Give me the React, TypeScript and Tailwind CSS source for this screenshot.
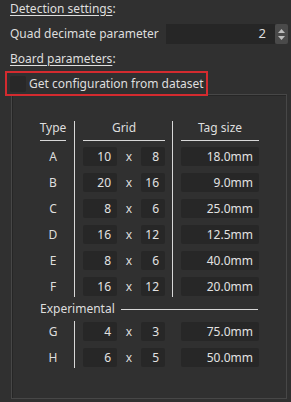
import React from "react";

const font = { fontFamily: '"Noto Sans", "Open Sans", sans-serif' };

type Row = { type: string; w: string; h: string; size: string };

const mainRows: Row[] = [
  { type: "A", w: "10", h: "8", size: "18.0mm" },
  { type: "B", w: "20", h: "16", size: "9.0mm" },
  { type: "C", w: "8", h: "6", size: "25.0mm" },
  { type: "D", w: "16", h: "12", size: "12.5mm" },
  { type: "E", w: "8", h: "6", size: "40.0mm" },
  { type: "F", w: "16", h: "12", size: "20.0mm" },
];

const expRows: Row[] = [
  { type: "G", w: "4", h: "3", size: "75.0mm" },
  { type: "H", w: "6", h: "5", size: "50.0mm" },
];

function Field({ value, width }: { value: string; width: string }) {
  return (
    <div className={`${width} h-[19px] bg-[#272727] rounded-[2px] flex items-center justify-end pr-[6px] text-[#e2e2e2]`}>
      {value}
    </div>
  );
}

function GridCell({ row }: { row: Row }) {
  return (
    <div className="flex items-center h-[19px]">
      <Field value={row.w} width="w-[34px]" />
      <span className="w-[24px] text-center">x</span>
      <Field value={row.h} width="w-[24px]" />
    </div>
  );
}

function Header({ label, width }: { label: string; width: string }) {
  return (
    <div className={`${width} h-[20px] border-b border-[#d8d8d8] flex items-start justify-center leading-[14px]`}>
      {label}
    </div>
  );
}

export default function App() {
  return (
    <div className="w-[291px] h-[402px] bg-[#303030] text-[#dedede] text-[12px] overflow-hidden relative" style={font}>
      <div className="pl-[10px] pt-[1px] h-[16px] leading-[16px]">
        <span className="underline underline-offset-2">Detection settings</span>:
      </div>

      <div className="flex items-center mt-[8px] h-[20px]">
        <div className="pl-[10px] w-[166px]">Quad decimate parameter</div>
        <div className="w-[109px] h-[20px] bg-[#262626] flex items-center justify-end pr-[9px] text-[13px]">2</div>
        <div className="w-[13px] h-[20px] bg-[#4a4a4a] rounded-[2px] flex flex-col items-center justify-center gap-[3px]">
          <svg width="7" height="4" viewBox="0 0 7 4"><path d="M0 4 L3.5 0 L7 4 Z" fill="#bdbdbd" /></svg>
          <svg width="7" height="4" viewBox="0 0 7 4"><path d="M0 0 L3.5 4 L7 0 Z" fill="#bdbdbd" /></svg>
        </div>
      </div>

      <div className="pl-[10px] mt-[7px] h-[16px] leading-[16px]">
        <span className="underline underline-offset-2">Board parameters</span>:
      </div>

      <div className="ml-[5px] mt-[4px] w-[203px] h-[25px] border-2 border-[#d42b2f] flex items-center gap-[3px] pl-[3px] relative z-10">
        <div className="w-[16px] h-[16px] bg-[#282828] rounded-[2px] shrink-0" />
        <span className="whitespace-nowrap">Get configuration from dataset</span>
      </div>

      <div className="ml-[11px] -mt-[2px] w-[276px] h-[305px] border border-[#474747] shadow-[inset_1px_1px_0_#262626] pt-[26px] pl-[28px]">
        <div className="flex">
          <div className="flex flex-col w-[26px] mr-[8px]">
            <Header label="Type" width="w-[26px]" />
            <div className="flex flex-col gap-[7px] mt-[6px]">
              {mainRows.map((r) => (
                <div key={r.type} className="h-[19px] flex items-center justify-center">{r.type}</div>
              ))}
            </div>
          </div>
          <div className="border-l border-[#d8d8d8] pl-[8px] pr-[7px] pb-[1px]">
            <Header label="Grid" width="w-[82px]" />
            <div className="flex flex-col gap-[7px] mt-[6px]">
              {mainRows.map((r) => (
                <GridCell key={r.type} row={r} />
              ))}
            </div>
          </div>
          <div className="border-l border-[#d8d8d8] pl-[8px]">
            <Header label="Tag size" width="w-[78px]" />
            <div className="flex flex-col gap-[7px] mt-[6px]">
              {mainRows.map((r) => (
                <Field key={r.type} value={r.size} width="w-[78px]" />
              ))}
            </div>
          </div>
        </div>

        <div className="flex items-center h-[20px] mt-[2px] w-[218px]">
          <span>Experimental</span>
          <div className="flex-1 h-px bg-[#d8d8d8] ml-[6px]" />
        </div>

        <div className="flex mt-[2px]">
          <div className="flex flex-col w-[26px] mr-[8px] gap-[7px] py-[1px]">
            {expRows.map((r) => (
              <div key={r.type} className="h-[19px] flex items-center justify-center">{r.type}</div>
            ))}
          </div>
          <div className="border-l border-[#d8d8d8] pl-[8px] pr-[8px] flex flex-col gap-[7px] py-[1px]">
            {expRows.map((r) => (
              <GridCell key={r.type} row={r} />
            ))}
          </div>
          <div className="flex flex-col gap-[7px] py-[1px] pl-[8px]">
            {expRows.map((r) => (
              <Field key={r.type} value={r.size} width="w-[78px]" />
            ))}
          </div>
        </div>
      </div>
    </div>
  );
}
